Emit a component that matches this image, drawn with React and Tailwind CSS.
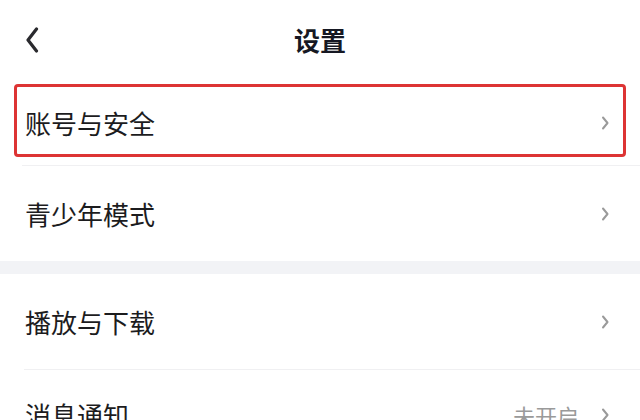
import React from "react";

function Chevron() {
  return (
    <svg width="8" height="14" viewBox="0 0 8 14" className="shrink-0">
      <path d="M2 1.5 L6.5 7 L2 12.5" fill="none" stroke="#9a9a9a" strokeWidth="2" strokeLinecap="round" strokeLinejoin="round" />
    </svg>
  );
}

function Row({ label, value, heightClass, children }) {
  return (
    <div className={`relative flex items-center justify-between pl-[25px] pr-[31px] ${heightClass}`}>
      <span className="text-[26px] leading-none text-[#1c1c1e]">{label}</span>
      <div className="flex items-center gap-[22px]">
        {value && <span className="text-[22px] leading-none text-[#9a9a9a]">{value}</span>}
        <Chevron />
      </div>
      {children}
    </div>
  );
}

export default function App() {
  return (
    <div
      className="w-[640px] h-[420px] overflow-hidden bg-white"
      style={{ fontFamily: '"Noto Sans CJK SC", "Noto Sans", sans-serif' }}
    >
      <div className="relative flex items-center justify-center h-[80px]">
        <svg width="14" height="26" viewBox="0 0 14 26" className="absolute left-[25px] top-[27px]">
          <path d="M11.5 2 L3 13 L11.5 24" fill="none" stroke="#2a2a2e" strokeWidth="3.2" strokeLinecap="round" strokeLinejoin="round" />
        </svg>
        <span className="text-[26px] font-bold leading-none text-[#161823]">设置</span>
      </div>
      <Row label="账号与安全" heightClass="h-[85px]">
        <div className="absolute left-[14px] right-[14px] top-[4px] bottom-[8px] rounded-[4px] border-[3px] border-[#dd3434] pointer-events-none" />
      </Row>
      <div className="ml-[22px] h-px bg-[#f0f0f2]" />
      <Row label="青少年模式" heightClass="h-[95px]" />
      <div className="h-[13px] bg-[#f2f3f6]" />
      <Row label="播放与下载" heightClass="h-[95px]" />
      <div className="ml-[24px] h-px bg-[#f0f0f2]" />
      <Row label="消息通知" value="未开启" heightClass="h-[90px]" />
    </div>
  );
}
